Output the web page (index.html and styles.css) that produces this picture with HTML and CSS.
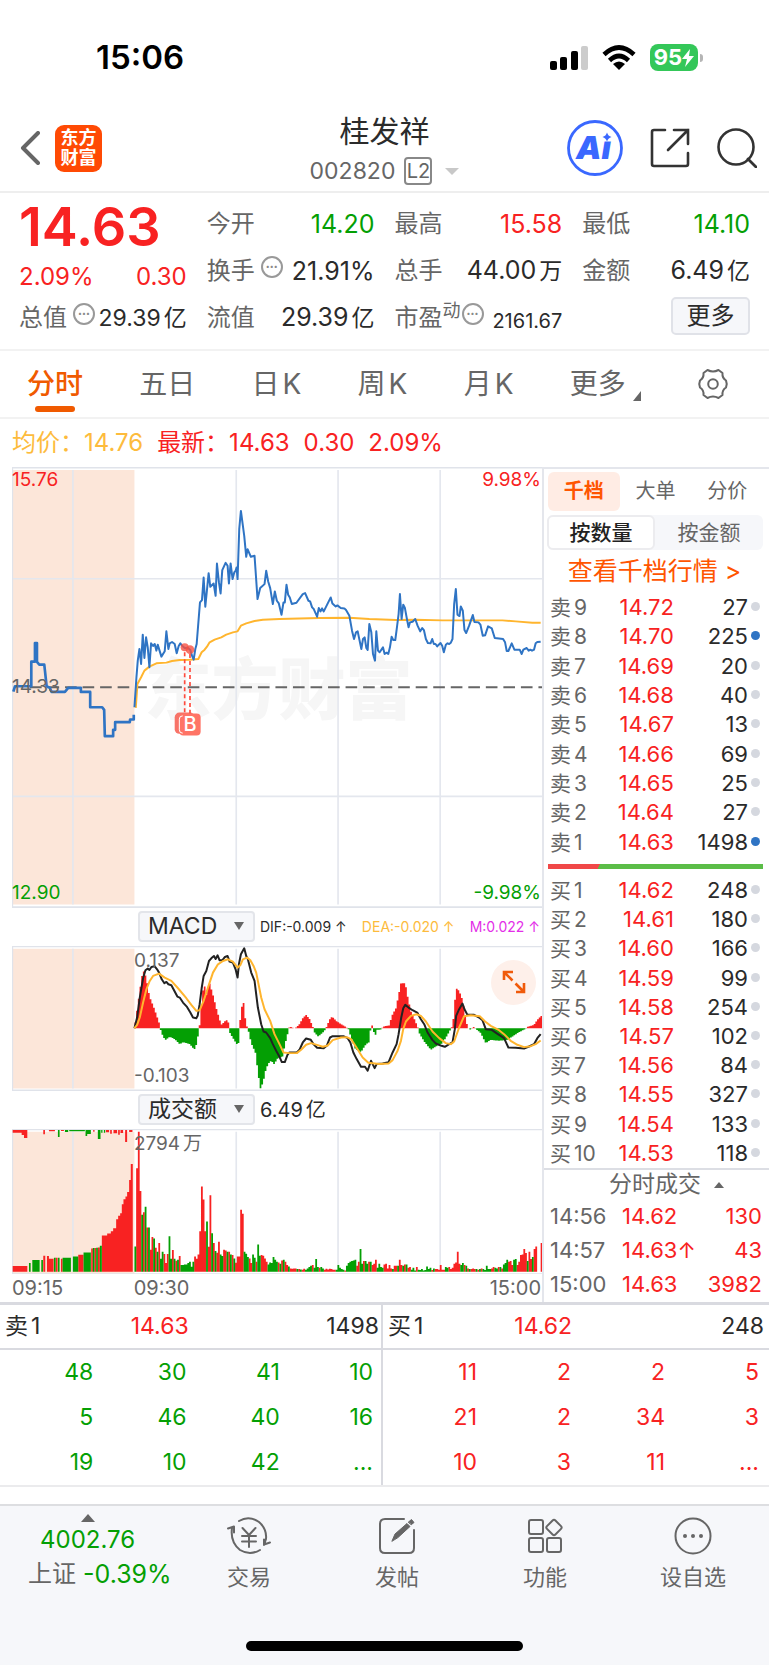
FILE: index.html
```html
<!DOCTYPE html>
<html lang="zh-CN">
<head>
<meta charset="utf-8">
<meta name="viewport" content="width=device-width, initial-scale=1">
<title>桂发祥 002820</title>
<link rel="stylesheet" href="styles.css">
</head>
<body>
<div class="status">
  <span class="status-time">15:06</span>
  <div class="status-icons">
    <svg width="38" height="24" viewBox="0 0 38 24" aria-hidden="true"><rect x="0" y="15" width="7" height="9" rx="2"/><rect x="10" y="11" width="7" height="13" rx="2"/><rect x="21" y="5" width="7" height="19" rx="2"/><rect x="31" y="0" width="7" height="24" rx="2" fill="#ccc"/></svg>
    <svg width="34" height="25" viewBox="0 0 34 25" aria-hidden="true"><g fill="none" stroke="#000" stroke-width="4.6"><path d="M2 9.500Q17-4.500 32 9.500"/><path d="M7.500 15.500Q17 6.500 26.500 15.500"/></g><path d="M17 25l-6-6q6-5 12 0z"/></svg>
    <div class="battery"><span>95</span><svg width="12" height="18" viewBox="0 0 12 18" aria-hidden="true"><path d="M8 0L0 10h5l-2 8 9-11H7z" fill="#fff"/></svg></div>
  </div>
</div>

<header class="header">
  <div class="header-left">
    <button class="icon-btn" aria-label="返回"><svg width="20" height="34" viewBox="0 0 20 34"><path d="M18 2L3 17l15 15" fill="none" stroke="#666" stroke-width="4" stroke-linecap="round" stroke-linejoin="round"/></svg></button>
    <a class="logo" href="#">东方<br>财富</a>
  </div>
  <div class="header-title">
    <h1>桂发祥</h1>
    <div class="code">002820 <span class="l2">L2</span><i class="tri-down"></i></div>
  </div>
  <div class="header-right">
    <button class="icon-btn" aria-label="AI"><svg width="56" height="56" viewBox="0 0 56 56"><circle cx="28" cy="28" r="26.500" fill="none" stroke="#3a68ff" stroke-width="2.800"/><text x="9" y="39" class="ai-text">Ai</text><path d="M35 12h11v9.500H35z" fill="#fff"/><path d="M40 12.500q1 3.500 4.500 4.500-3.500 1-4.500 4.500-1-3.500-4.500-4.500 3.500-1 4.500-4.500z" fill="#3a68ff"/></svg></button>
    <button class="icon-btn" aria-label="分享"><svg width="40" height="40" viewBox="0 0 40 40"><path d="M15 2H4Q2 2 2 4v32q0 2 2 2h32q2 0 2-2V25M24 2h14v14M38 2L18 22" fill="none" stroke="#333" stroke-width="2.600" stroke-linecap="round"/></svg></button>
    <button class="icon-btn" aria-label="搜索"><svg width="40" height="40" viewBox="0 0 40 40"><circle cx="19" cy="19" r="17.500" fill="none" stroke="#333" stroke-width="2.600"/><path d="M31 31l8 8" stroke="#333" stroke-width="2.800" stroke-linecap="round"/></svg></button>
  </div>
</header>

<section class="quote">
  <div class="price-box"><strong>14.63</strong><div><span>2.09%</span><span>0.30</span></div></div>
  <div class="item"><span>今开</span><b class="green">14.20</b></div>
  <div class="item"><span>最高</span><b class="red">15.58</b></div>
  <div class="item"><span>最低</span><b class="green">14.10</b></div>
  <div class="item"><span>换手</span><button class="info" aria-label="换手说明">•••</button><b>21.91%</b></div>
  <div class="item"><span>总手</span><b>44.00<em>万</em></b></div>
  <div class="item"><span>金额</span><b>6.49<em>亿</em></b></div>
  <div class="item"><span>总值</span><button class="info" aria-label="总值说明">•••</button><b class="fit">29.39<em>亿</em></b></div>
  <div class="item"><span>流值</span><b>29.39<em>亿</em></b></div>
  <div class="item"><span>市盈<sup>动</sup></span><button class="info tight" aria-label="市盈说明">•••</button><b class="small">2161.67</b></div>
  <div class="item end"><button class="more">更多</button></div>
</section>

<nav class="tabs">
  <button class="active">分时</button><button>五日</button><button>日<em>K</em></button><button>周<em>K</em></button><button>月<em>K</em></button>
  <button class="has-corner">更多</button>
  <button class="gear" aria-label="设置"><svg width="32" height="32" viewBox="0 0 32 32" fill="none" stroke="#666" stroke-width="2"><path d="M10.500 2q5.500 3 11 0l4 3q-.5 5 3.500 7.500 1.500 3.500 0 7-4 2.500-3.500 7.500l-4 3q-5.500-3-11 0l-4-3Q7 22 3 19.500q-1.500-3.500 0-7Q7 10 6.500 5z" stroke-linejoin="round"/><circle cx="16" cy="16" r="4.800"/></svg></button>
</nav>

<p class="legend"><span class="amber">均价：14.76</span><span>最新：14.63</span><span>0.30</span><span>2.09%</span></p>

<main class="board">
  <section class="charts">
    <div class="chart price-chart">
      <span class="watermark">东方财富</span>
      <svg viewBox="36 18 1593 1325" aria-label="分时走势">
        <path d="M38 27h366v1306H38z" fill="#fce6d9"/>
        <path d="M219 27v1306M710 27v1306M1016 27v1306M1323 27v1306M38 354h1591M38 1008h1591" class="grid"/>
        <path d="M36 20h1593M36 1341h1593M37 20v1321" class="edge"/>
        <path d="M90 680H1629" class="dash"/>
        <polyline class="price pre" points="40,693 45,677 94,677 94,603 105,603 105,547 111,547 111,604 118,612 133,612 135,630 140,677 150,682 155,694 195,694 205,682 243,682 243,694 271,694 271,740 307,740 313,748 315,827 340,827 340,808 346,808 346,785 390,785 391,777 402,777 402,763"/>
        <polyline class="avg" points="408,742 413,670 424,650 434,630 449,618 470,608 500,606 517,601 540,598 570,597 596,595 606,575 615,567 622,558 630,545 645,537 665,530 680,522 700,515 714,512 724,495 740,488 765,481 790,477 840,475 900,473 960,472 1050,471 1110,475 1190,478 1250,477 1330,479 1410,479 1510,479 1550,482 1600,486 1625,486"/>
        <polyline class="price" points="404,740 410,650 414,600 419,565 424,610 429,522 434,592 439,530 444,560 449,620 454,548 460,556 465,550 470,570 474,552 485,588 495,572 500,512 506,565 510,548 517,544 525,550 531,578 537,556 542,548 548,556 555,562 565,562 572,568 577,585 582,597 587,565 591,550 601,425 607,418 612,350 617,438 627,337 632,378 642,368 648,405 652,308 658,365 663,398 668,328 678,306 684,315 688,368 693,308 699,355 704,335 708,330 711,320 714,355 719,205 724,150 734,225 740,288 744,265 754,288 765,285 774,415 782,382 795,370 800,330 806,362 812,382 820,430 826,392 832,420 838,428 846,462 852,425 856,425 861,372 866,402 871,410 877,430 891,426 910,400 917,397 927,420 932,422 938,440 943,445 953,468 958,442 963,452 968,443 973,452 994,410 999,428 1009,437 1014,434 1024,442 1035,443 1040,448 1050,465 1058,510 1064,535 1070,515 1075,512 1086,565 1091,535 1096,530 1101,562 1105,568 1110,490 1116,515 1121,580 1127,600 1131,512 1136,570 1141,575 1151,560 1156,580 1162,576 1167,580 1172,560 1177,528 1182,538 1188,538 1193,500 1198,460 1202,400 1207,475 1212,432 1217,442 1223,475 1228,500 1232,485 1240,483 1248,475 1255,495 1263,512 1269,502 1274,508 1280,535 1286,547 1294,548 1299,535 1304,550 1309,550 1314,557 1324,547 1329,555 1334,575 1340,552 1345,548 1350,550 1355,546 1360,535 1365,430 1370,385 1375,462 1381,466 1385,437 1391,450 1396,508 1401,517 1410,495 1421,463 1426,484 1438,485 1444,492 1451,525 1458,524 1467,497 1478,503 1487,532 1512,535 1518,545 1523,571 1528,571 1538,548 1546,567 1562,567 1568,580 1573,567 1583,562 1589,570 1594,567 1599,570 1605,567 1610,548 1615,544 1625,543"/>
        <path d="M555 575v180M571 580v180" stroke="#ff4a3d" stroke-width="5" stroke-dasharray="12 9"/>
        <g fill="#f65144" fill-opacity=".8"><circle cx="555" cy="560" r="12"/><circle cx="571" cy="567" r="13"/><rect x="525" y="756" width="60" height="64" rx="14"/></g>
        <rect x="539" y="759" width="64" height="66" rx="12" fill="#ff7466"/>
        <path d="M549 766q-10 0-10 10v32q0 10 10 10" stroke="#fff" stroke-width="3" fill="none"/>
        <text x="571" y="813" class="mark">B</text>
      </svg>
      <span class="tag tl red">15.76</span><span class="tag tr red">9.98%</span>
      <span class="tag ml">14.33</span>
      <span class="tag bl green">12.90</span><span class="tag br green">-9.98%</span>
    </div>
    <div class="indicator">
      <label class="pick"><select aria-label="指标一"><option>MACD</option><option>KDJ</option></select></label>
      <div class="macd-values"><span>DIF:-0.009 ↑</span><span class="amber">DEA:-0.020 ↑</span><span class="magenta">M:0.022 ↑</span></div>
    </div>
    <div class="chart">
      <svg viewBox="36 135 1593 435" aria-label="MACD">
        <path d="M38 143h366v420H38z" fill="#fce6d9"/>
        <path d="M219 143v420M710 143v420M1016 143v420M1323 143v420" class="grid"/>
        <path d="M36 136h1593M36 569h1593M37 136v433" class="edge"/>
        <path id="macd-up" fill="#f82222"/><path id="macd-down" fill="#049f04"/>
        <polyline class="dif" points="404,382 412,350 420,290 430,232 437,208 444,203 449,207 455,198 465,196 472,205 478,215 486,235 494,247 500,243 506,250 515,253 525,272 533,287 540,290 550,305 562,318 572,335 580,350 590,352 594,345 600,310 606,262 612,225 620,210 628,180 635,172 643,165 648,174 654,163 660,178 668,178 676,168 684,165 690,182 700,185 708,205 714,230 718,190 724,160 734,142 740,165 745,175 755,215 765,240 775,320 785,370 792,392 800,395 812,412 820,430 830,450 840,468 847,484 856,484 864,462 870,455 892,455 900,447 910,425 920,413 934,417 942,430 953,441 973,442 982,435 992,410 1000,406 1032,406 1045,412 1053,425 1062,455 1072,475 1085,498 1097,498 1105,510 1115,480 1126,502 1132,490 1150,488 1168,484 1180,455 1192,430 1198,400 1206,350 1212,322 1218,312 1228,320 1240,328 1254,335 1265,355 1275,370 1285,395 1300,418 1310,428 1327,435 1337,438 1350,430 1360,425 1367,385 1371,345 1380,325 1390,308 1396,325 1405,342 1425,342 1440,350 1450,358 1460,385 1478,387 1492,397 1515,412 1528,440 1550,441 1575,443 1590,437 1605,430 1615,412 1625,400"/>
        <polyline class="avg" points="404,382 412,372 420,350 430,305 440,265 450,240 460,225 478,218 495,230 515,240 535,262 560,292 575,312 590,330 600,328 612,300 625,260 640,215 655,190 670,180 685,175 700,182 714,200 722,193 730,175 742,170 752,177 762,195 770,215 785,290 795,325 812,360 825,400 840,430 852,455 870,457 892,457 905,447 920,432 935,427 955,433 970,438 985,434 1000,418 1025,410 1042,409 1055,415 1070,438 1090,470 1107,486 1140,490 1168,488 1180,478 1195,450 1205,420 1212,385 1220,362 1235,345 1252,340 1265,345 1280,362 1300,392 1320,412 1340,427 1355,430 1365,422 1380,380 1395,346 1415,343 1442,346 1458,362 1475,375 1500,388 1515,400 1535,420 1555,432 1575,439 1595,436 1610,430 1625,419"/>
      </svg>
      <span class="tag open-top">0.137</span><span class="tag open-bottom">-0.103</span>
      <button class="expand" aria-label="全屏"><svg width="24" height="24" viewBox="0 0 24 24"><path d="M2 10V2h9M2.500 2.500l8 8M14 22h8v-9M21.500 21.500l-8-8" fill="none" stroke="#f05a0a" stroke-width="2.600"/></svg></button>
    </div>
    <div class="indicator">
      <label class="pick"><select aria-label="指标二"><option>成交额</option><option>成交量</option></select></label>
      <span class="turnover">6.49<em>亿</em></span>
    </div>
    <div class="chart">
      <svg viewBox="36 684 1593 438" aria-label="成交额">
        <path d="M38 692h366v430H38z" fill="#fce6d9"/>
        <path d="M219 692v421M710 692v421M1016 692v421M1323 692v421" class="grid"/>
        <path d="M36 685h1593M36 1120h1593M37 685v435" class="edge"/>
        <path id="vol-up" fill="#f82222"/><path id="vol-down" fill="#049f04"/>
      </svg>
      <span class="tag open-top">2794<em>万</em></span>
    </div>
    <div class="times"><span>09:15</span><span>09:30</span><span>15:00</span></div>
  </section>

  <aside class="book">
    <div class="book-tabs"><button class="active">千档</button><button>大单</button><button>分价</button></div>
    <div class="segment"><button class="active">按数量</button><button>按金额</button></div>
    <a class="book-link" href="#">查看千档行情 &gt;</a>
    <table class="levels asks">
      <tr><th>卖<em>9</em></th><td>14.72</td><td>27</td></tr>
      <tr class="big"><th>卖<em>8</em></th><td>14.70</td><td>225</td></tr>
      <tr><th>卖<em>7</em></th><td>14.69</td><td>20</td></tr>
      <tr><th>卖<em>6</em></th><td>14.68</td><td>40</td></tr>
      <tr><th>卖<em>5</em></th><td>14.67</td><td>13</td></tr>
      <tr><th>卖<em>4</em></th><td>14.66</td><td>69</td></tr>
      <tr><th>卖<em>3</em></th><td>14.65</td><td>25</td></tr>
      <tr><th>卖<em>2</em></th><td>14.64</td><td>27</td></tr>
      <tr class="big"><th>卖<em>1</em></th><td>14.63</td><td>1498</td></tr>
    </table>
    <div class="ratio"></div>
    <table class="levels bids">
      <tr><th>买<em>1</em></th><td>14.62</td><td>248</td></tr>
      <tr><th>买<em>2</em></th><td>14.61</td><td>180</td></tr>
      <tr><th>买<em>3</em></th><td>14.60</td><td>166</td></tr>
      <tr><th>买<em>4</em></th><td>14.59</td><td>99</td></tr>
      <tr><th>买<em>5</em></th><td>14.58</td><td>254</td></tr>
      <tr><th>买<em>6</em></th><td>14.57</td><td>102</td></tr>
      <tr><th>买<em>7</em></th><td>14.56</td><td>84</td></tr>
      <tr><th>买<em>8</em></th><td>14.55</td><td>327</td></tr>
      <tr><th>买<em>9</em></th><td>14.54</td><td>133</td></tr>
      <tr><th>买<em>10</em></th><td>14.53</td><td>118</td></tr>
    </table>
    <button class="deals-title">分时成交<i class="tri-up"></i></button>
    <table class="deals">
      <tr><th>14:56</th><td>14.62</td><td>130</td></tr>
      <tr><th>14:57</th><td>14.63↑</td><td>43</td></tr>
      <tr><th>15:00</th><td>14.63</td><td>3982</td></tr>
    </table>
  </aside>
</main>

<section class="queues">
  <div class="queue">
    <div class="queue-head"><span>卖<em>1</em></span><span class="red">14.63</span><span>1498</span></div>
    <table class="green">
      <tr><td>48</td><td>30</td><td>41</td><td>10</td></tr>
      <tr><td>5</td><td>46</td><td>40</td><td>16</td></tr>
      <tr><td>19</td><td>10</td><td>42</td><td>...</td></tr>
    </table>
  </div>
  <div class="queue">
    <div class="queue-head"><span>买<em>1</em></span><span class="red">14.62</span><span>248</span></div>
    <table class="red">
      <tr><td>11</td><td>2</td><td>2</td><td>5</td></tr>
      <tr><td>21</td><td>2</td><td>34</td><td>3</td></tr>
      <tr><td>10</td><td>3</td><td>11</td><td>...</td></tr>
    </table>
  </div>
</section>

<footer class="footer">
  <nav class="toolbar">
    <button class="index"><i class="tri-up"></i><span class="green">4002.76</span><span class="index-name">上证<span class="green">-0.39%</span></span></button>
    <button><svg width="44" height="40" viewBox="0 0 44 40"><path d="M12 5Q22-1 32 6q8 7 7 17l-2 6M33 34q-10 6-20 0Q3 26 5 12M1 12.500l6-2v6M43 26.500l-6 2v-5M15.500 12l6.500 7 6.500-7M22 19v12M15 20h14M15 25.500h14"/></svg><span>交易</span></button>
    <button><svg width="40" height="40" viewBox="0 0 40 40"><path d="M27 3H8Q3 3 3 8v24q0 5 5 5h24q5 0 5-5V14"/><path d="M15 25l3-7L30 7.500l3 3L21 21.500zM31.500 6l3-2.500 2.500 3-2.500 2z" fill="#666" stroke-width="1"/></svg><span>发帖</span></button>
    <button><svg width="40" height="40" viewBox="0 0 40 40"><rect x="4" y="4" width="14" height="14" rx="2"/><rect x="4" y="22" width="14" height="14" rx="2"/><rect x="22" y="22" width="14" height="14" rx="2"/><path d="M27.600 4.500q1.400-1.400 2.800 0l5.600 5.600q1.400 1.400 0 2.800l-5.600 5.600q-1.400 1.400-2.800 0L22 12.900q-1.400-1.400 0-2.800z"/></svg><span>功能</span></button>
    <button><svg width="40" height="40" viewBox="0 0 40 40"><circle cx="20" cy="20" r="17.500"/><g fill="#666" stroke="none"><circle cx="12" cy="20" r="2"/><circle cx="20" cy="20" r="2"/><circle cx="28" cy="20" r="2"/></g></svg><span>设自选</span></button>
  </nav>
  <div class="home-bar"></div>
</footer>
<script src="charts.js"></script>
</body>
</html>
```
FILE: styles.css
```css
* { box-sizing: border-box; }
body {
  margin: 0;
  background: #fff;
  color: #2b2b2b;
  font-family: Inter, "Noto Sans CJK SC", sans-serif;
  font-size: 23px;
  line-height: 30px;
}
button, select { font: inherit; color: inherit; background: none; border: 0; padding: 0; margin: 0; }
a { text-decoration: none; }
em { font-style: normal; margin-left: 3px; }
svg { display: block; }
table { border-collapse: collapse; width: 100%; }
th, td { padding: 0; font-weight: 400; }
.red { color: #f82222; }
.green { color: #049f04; }
.amber { color: #fdbb3c; }
.magenta { color: #e32ee8; }
.tri-down { border: 7px solid transparent; border-top-color: #c8c8c8; border-bottom: 0; }
.tri-up { border: 6px solid transparent; border-bottom: 7px solid #666; border-top: 0; }

.status { display: flex; justify-content: space-between; align-items: center; padding: 37px 71px 25px 96px; color: #000; }
.status-time { font-size: 33px; font-weight: 600; line-height: 41px; }
.status-icons { display: flex; align-items: center; gap: 14px; }
.battery { position: relative; display: flex; align-items: center; justify-content: center; width: 48px; height: 27px; border-radius: 8px; background: #34c759; color: #fff; font-size: 22px; font-weight: 700; line-height: 27px; }
.battery::after { content: ""; position: absolute; left: 100%; top: 10px; width: 3px; height: 8px; margin-left: 2px; border-radius: 0 3px 3px 0; background: #b5b5b5; }

.header { display: grid; grid-template-columns: 1fr auto 1fr; align-items: center; padding: 8px 12px 2px 20px; border-bottom: 2px solid #eee; }
.header-left, .header-right { display: flex; align-items: center; padding-bottom: 4px; }
.header-left { gap: 15px; }
.header-right { justify-content: flex-end; gap: 27px; }
.logo { width: 47px; height: 47px; border-radius: 9px; background: #ff4a04; color: #fff; font-size: 18px; font-weight: 700; line-height: 20px; text-align: center; padding-top: 3px; }
.header-title { text-align: center; margin-right: 8px; }
.header-title h1 { margin: 0; font-size: 30px; font-weight: 400; line-height: 40px; }
.code { display: flex; align-items: center; gap: 9px; color: #666; padding: 6px 0 4px; line-height: 28px; }
.l2 { width: 28px; border: 2px solid #888; border-radius: 4px; font-size: 20px; line-height: 24px; text-align: center; }
.code .tri-down { margin-left: 4px; }
.ai-text { font: italic 900 32px Inter, sans-serif; fill: #3a68ff; }

.quote { display: grid; grid-template-columns: repeat(4, minmax(0, 1fr)); grid-auto-rows: 47px; column-gap: 20px; padding: 7px 19px 8px; border-bottom: 2px solid #f2f2f2; }
.price-box { grid-row: span 2; color: #f82222; }
.price-box strong { display: block; font-size: 54px; font-weight: 600; line-height: 54px; }
.price-box div { display: flex; justify-content: space-between; font-size: 24px; line-height: 46px; }
.item { display: flex; align-items: center; white-space: nowrap; }
.item > span { color: #666; font-size: 24px; }
.item b { margin-left: auto; font-weight: 400; font-size: 25px; }
.item b em { font-size: 23px; }
.item .fit { font-size: 23px; }
.item .small { font-size: 20px; padding-top: 6px; }
.item sup { font-size: 18px; line-height: 18px; vertical-align: 9px; }
.info { width: 22px; height: 22px; border: 2px solid #999; border-radius: 50%; color: #888; font-size: 7px; line-height: 18px; text-align: center; margin: 0 0 8px 6px; }
.info.tight { margin-left: 1px; }
.end { justify-content: flex-end; }
.more { width: 79px; height: 38px; background: #f6f7fa; border: 2px solid #e0e2e8; border-radius: 5px; font-size: 24px; line-height: 34px; margin-bottom: 4px; }

.tabs { display: flex; justify-content: space-between; align-items: center; padding: 0 40px 0 27px; border-bottom: 2px solid #f2f2f2; color: #666; font-size: 28px; line-height: 66px; }
.tabs button { position: relative; }
.tabs .active { color: #f05a00; font-weight: 500; }
.tabs .active::after { content: ""; position: absolute; left: 8px; right: 8px; bottom: 5px; height: 6px; border-radius: 3px; background: #f05a00; }
.has-corner { display: flex; align-items: center; gap: 7px; }
.has-corner::after { content: ""; border-left: 8px solid transparent; border-bottom: 10px solid #666; margin-top: 24px; }

.legend { display: flex; gap: 14px; margin: 0; padding: 0 12px; font-size: 24px; line-height: 48px; color: #f82222; }

.board { display: grid; grid-template-columns: minmax(0, 544fr) minmax(0, 225fr); border-bottom: 3px solid #d9dae0; }
.charts { padding-left: 12px; border-right: 2px solid #e4e6ec; }
.chart { position: relative; }
.chart svg { width: 100%; position: relative; }
.chart .expand svg { width: 24px; }
.grid { stroke: #e4e7ee; stroke-width: 5; fill: none; }
.edge { stroke: #e0e3ea; stroke-width: 5; fill: none; }
.dash { stroke: #666; stroke-width: 6; stroke-dasharray: 35 17.700; }
.price { fill: none; stroke: #2f74c4; stroke-width: 6; stroke-linejoin: round; }
.pre { stroke-width: 8; }
.avg { fill: none; stroke: #ffb52e; stroke-width: 6; stroke-linejoin: round; }
.dif { fill: none; stroke: #222; stroke-width: 6; stroke-linejoin: round; }
.mark { font: 500 60px Inter, sans-serif; fill: #fff; text-anchor: middle; }
.watermark { position: absolute; left: 25%; top: 42%; font-size: 67px; font-weight: 900; line-height: 76px; color: #f6f6f6; }
.tag { position: absolute; font-size: 19px; line-height: 24px; color: #666; }
.tag.red { color: #f82222; }
.tag.green { color: #049f04; }
.tl { left: 0; top: 1px; }
.tr { right: 1px; top: 1px; }
.ml { left: 0; top: 208px; }
.bl { left: 0; bottom: 3px; }
.br { right: 1px; bottom: 3px; }
.open-top { left: 23%; top: 3px; }
.open-bottom { left: 23%; bottom: 3px; }
.expand { position: absolute; right: 6px; top: 14px; width: 45px; height: 45px; border-radius: 50%; background: #fef0ea; display: grid; place-items: center; }
.indicator { display: flex; align-items: center; gap: 5px; height: 38px; padding-left: 126px; padding-right: 2px; }
.pick { position: relative; flex: none; width: 117px; height: 31px; }
.pick select { appearance: none; width: 100%; height: 31px; padding-left: 8px; background: #f6f7fa; border: 2px solid #e3e5ea; border-radius: 4px; line-height: 27px; }
.pick::after { content: ""; position: absolute; right: 11px; top: 11px; border: 5px solid transparent; border-top: 8px solid #666; border-bottom: 0; pointer-events: none; }
.macd-values { flex: 1; display: flex; justify-content: space-between; font-size: 14px; white-space: nowrap; }
.turnover { font-size: 20px; }
.times { display: grid; grid-template-columns: 23% 1fr auto; font-size: 20px; line-height: 28px; color: #666; padding-right: 1px; }

.book { display: flex; flex-direction: column; border-top: 2px solid #e4e6ec; padding-top: 3px; }
.book-tabs { display: grid; grid-template-columns: repeat(3, 1fr); margin: 0 6px 0 4px; font-size: 20px; line-height: 39px; color: #666; }
.book-tabs .active { background: #ffece4; border-radius: 6px; color: #ff5500; font-weight: 700; }
.segment { display: grid; grid-template-columns: 1fr 1fr; margin: 4px 6px 0 3px; background: #f6f7fa; border-radius: 6px; font-size: 21px; color: #666; }
.segment button { line-height: 31px; border: 2px solid transparent; border-radius: 6px; }
.segment .active { background: #fff; border-color: #ececef; color: #222; font-weight: 500; }
.book-link { color: #ff5500; font-size: 25px; line-height: 43px; text-align: center; white-space: nowrap; padding-right: 4px; }
.levels { margin-left: 6px; width: calc(100% - 15px); table-layout: fixed; line-height: 29px; }
.asks { height: 264px; }
.bids { height: 292px; }
.levels th { text-align: left; color: #666; font-size: 21px; width: 27%; white-space: nowrap; }
.levels td { text-align: right; font-size: 22px; }
.levels td:nth-child(2) { color: #f82222; width: 32%; }
.levels td:last-child::after { content: ""; display: inline-block; width: 9px; height: 9px; border-radius: 50%; background: #d5d8df; margin-left: 3px; vertical-align: 4px; }
.levels .big td:last-child::after { background: #2f74c4; }
.ratio { height: 5px; margin: 7px 6px 7px 4px; background: linear-gradient(120deg, #f04848 24%, #5bbd48 24%); }
.deals-title { display: flex; align-items: center; justify-content: center; gap: 13px; padding-left: 20px; border-top: 2px solid #dcdee4; color: #666; line-height: 29px; }
.deals-title .tri-up { border-width: 0 5px 6px; }
.deals { margin-left: 6px; width: calc(100% - 13px); font-size: 22px; line-height: 34px; color: #f82222; }
.deals th { color: #666; text-align: left; width: 72px; }
.deals td:last-child { text-align: right; }

.queues { display: grid; grid-template-columns: 383fr 386fr; border-bottom: 2px solid #ebebed; }
.queue:first-child { border-right: 2px solid #d9dae0; }
.queue-head { display: grid; grid-template-columns: repeat(3, 1fr); padding: 0 2px 0 5px; line-height: 43px; border-bottom: 2px solid #d9dae0; }
.queue-head span:nth-child(2) { padding-left: 1px; }
.queue-head span:last-child { text-align: right; }
.queue + .queue .queue-head { padding-right: 5px; }
.queue table { width: calc(100% - 8px); table-layout: fixed; line-height: 45px; }
.queue + .queue table { width: calc(100% - 10px); }
.queue table td { text-align: right; }

.footer { margin-top: 17px; background: #f6f7fa; border-top: 2px solid #dddee1; padding-bottom: 16px; }
.toolbar { display: grid; grid-template-columns: 175fr repeat(4, 148fr); padding: 8px 2px 48px 0; color: #666; }
.toolbar button { display: flex; flex-direction: column; align-items: center; font-size: 22px; line-height: 32px; padding-top: 2px; gap: 5px; }
.toolbar svg { fill: none; stroke: #666; stroke-width: 2; stroke-linecap: round; stroke-linejoin: round; }
.toolbar .index { font-size: 24px; padding-top: 0; gap: 3px; padding-left: 28px; align-items: flex-start; white-space: nowrap; }
.toolbar .index > .green { padding-left: 12px; line-height: 30px; }
.toolbar .index > .tri-up { margin-left: 53px; border-width: 0 7px 8px; }
.index-name { display: flex; gap: 7px; }
.index-name .green { font-size: 25px; }
.home-bar { width: 36%; height: 10px; margin: 0 auto; border-radius: 5px; background: #000; }
```
FILE: charts.js
```js
const START = 404, PITCH = 5.085, COUNT = 241;
const bar = (x, y, w, h) => `M${x.toFixed(1)} ${y.toFixed(1)}h${w}v${h.toFixed(1)}h${-w}z`;
const put = (id, d) => document.getElementById(id).setAttribute("d", d);

// MACD histogram: [x, value] knots, interpolated for each minute
const macd = [[404,0],[412,55],[421,120],[429,170],[434,170],[440,147],[449,95],[460,68],[470,40],[480,10],[484,-12],[496,-36],[510,-26],[525,-33],[540,-48],[550,-42],[570,-48],[584,-64],[592,-45],[598,0],[600,10],[604,60],[609,110],[614,130],[620,100],[629,138],[640,100],[650,60],[660,25],[665,10],[680,25],[686,18],[690,-12],[700,-30],[708,-42],[716,-55],[720,5],[725,60],[732,76],[737,30],[742,5],[747,-10],[755,-45],[768,-75],[775,-130],[782,-182],[790,-165],[800,-120],[808,-105],[815,-98],[824,-108],[835,-90],[850,-85],[855,-55],[865,-15],[868,2],[875,4],[882,-1],[890,2],[900,12],[910,30],[920,40],[930,28],[940,5],[945,-12],[955,-25],[965,-18],[975,-8],[982,5],[990,25],[998,35],[1010,22],[1025,12],[1040,3],[1048,-4],[1055,-28],[1068,-62],[1085,-72],[1100,-48],[1110,-42],[1114,0],[1118,10],[1122,-8],[1128,-22],[1132,-5],[1145,-4],[1152,5],[1170,8],[1178,38],[1190,60],[1198,100],[1205,135],[1218,135],[1225,95],[1235,50],[1245,28],[1255,5],[1260,-15],[1275,-40],[1295,-65],[1310,-55],[1330,-45],[1345,-20],[1355,-2],[1361,10],[1366,70],[1371,120],[1380,112],[1390,85],[1400,25],[1406,2],[1412,-5],[1423,4],[1430,-2],[1445,-15],[1460,-45],[1475,-35],[1500,-38],[1525,-35],[1540,-25],[1560,-12],[1580,-2],[1586,4],[1605,10],[1615,25],[1627,37],[1640,37]];
let up = "", down = "";
for (let i = 0; i < COUNT; i++) {
  const x = START + i * PITCH, mid = x + 2.5;
  const k = macd.findIndex(p => p[0] > mid);
  const [x0, v0] = macd[k - 1], [x1, v1] = macd[k];
  const v = v0 + (v1 - v0) * (mid - x0) / (x1 - x0);
  if (v > 0) up += bar(x, 382 - v, 5.2, v); else down += bar(x, 382, 5.2, -v);
}
put("macd-up", up);
put("macd-down", down);

// Turnover per minute: colour letter and bar height
const turnover = "g76 r311 r421 r243 g171 r179 g195 r133 g133 r66 r104 g100 r72 g60 r86 g39 g60 r53 r26 r53 g107 g39 r65 g39 r33 g36 r47 g20 g20 g22 g22 g26 g30 g15 g30 r46 r39 r52 r122 r256 r217 r122 g151 r75 r230 g116 r86 g62 r57 r90 g52 g47 r66 r64 g60 r60 g52 r50 g40 r27 r46 r46 r186 r174 g60 g54 g44 r40 r26 g52 g42 r30 g82 g48 r50 r48 r40 r30 g22 g28 g26 g44 g36 g30 r28 g24 r34 g36 r30 r20 g16 r10 r9 r10 r10 g8 r8 g7 r6 r9 g6 g10 g14 g18 r20 g12 g38 g14 r12 g14 g10 r6 r9 r7 r9 r8 r6 r6 g6 g20 g12 g8 g6 r4 g18 g26 g30 g32 g34 g36 r18 r30 g68 g24 r32 g32 g24 r30 g30 r20 r24 r36 g12 g24 g14 g12 r22 r24 r10 r20 r10 g8 r18 r18 g18 r36 r20 g18 r22 g22 r12 r14 g6 g12 g4 r14 g6 g5 g8 g4 g5 g16 g8 g12 r5 g10 r8 r8 r6 r20 r6 r6 g14 g12 r14 r8 r12 r24 r28 r60 r24 g20 g26 r20 g18 r10 g8 r8 r10 r8 g8 r6 g8 r10 g8 g5 g18 g8 g8 r10 r14 g12 g10 r14 g14 r10 g22 g26 g36 r30 r32 r20 g36 g38 r20 r30 r50 r52 r68 r56 g32 r60 r38 g44 r68 r76".split(" ");
const auction = [[38,82,17,"r"],[87,92,26,"g"],[97,119,35,"g"],[124,129,35,"g"],[130,136,48,"r"],[141,147,47,"r"],[147,161,39,"r"],[162,167,42,"g"],[167,173,42,"r"],[174,179,42,"g"],[183,188,39,"r"],[188,213,42,"g"],[219,235,46,"g"],[235,251,51,"r"],[251,273,58,"g"],[274,279,70,"r"],[279,284,71,"g"],[284,289,71,"r"],[289,294,72,"g"],[294,300,73,"r"],[300,306,78,"g"],[306,322,109,"r"],[322,333,115,"r"],[333,340,122,"r"],[340,349,131,"r"],[349,355,158,"r"],[355,361,168,"r"],[361,366,176,"r"],[366,371,203,"r"],[371,377,218,"r"],[377,382,226,"r"],[382,388,240,"r"],[388,393,276,"r"],[393,399,324,"r"]];
const unmatched = [[38,65,8,"r"],[65,72,15,"r"],[72,82,24,"r"],[130,135,13,"r"],[147,165,4,"r"],[174,179,21,"g"],[183,192,3,"r"],[195,205,6,"g"],[208,255,4,"g"],[257,262,18,"g"],[262,273,12,"g"],[280,284,5,"r"],[294,302,27,"g"],[304,308,8,"g"],[312,316,8,"g"],[318,328,7,"r"],[331,336,11,"r"],[341,352,10,"r"],[355,360,14,"r"],[362,370,9,"r"],[376,382,36,"r"],[388,398,6,"r"]];
const vol = { r: "", g: "" };
const last = turnover.length - 1, right = 1609;
turnover.forEach((t, i) => {
  const x = START + i * (right - START) / last;
  const h = +t.slice(1);
  vol[t[0]] += bar(x, 1113 - h, 5.4, h);
});
vol.r += bar(1625, 1027, 5, 86);
auction.forEach(([a, b, h, c]) => { vol[c] += bar(a, 1113 - h, b - a, h); });
unmatched.forEach(([a, b, h, c]) => { vol[c] += bar(a, 687, b - a, h); });
put("vol-up", vol.r);
put("vol-down", vol.g);
```
